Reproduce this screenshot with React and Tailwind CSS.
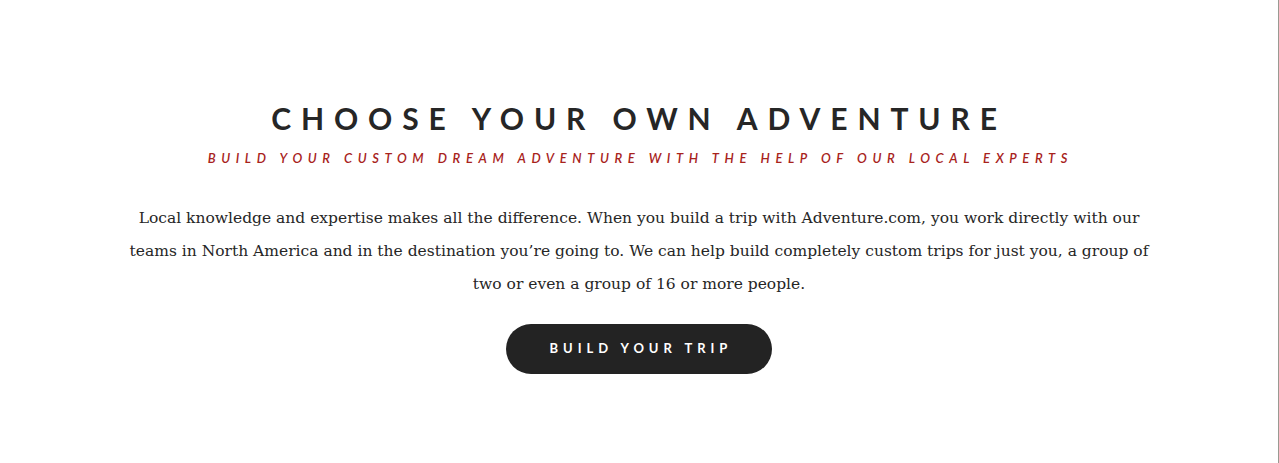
import React from 'react';

const App = () => {
    return (
        <div className="w-[1279px] h-[463px] bg-white flex">
            <div className="flex-1 flex flex-col items-center pt-[100px]">
                {/* Heading */}
                <h2 className="text-[30px] leading-[36px] font-bold tracking-[0.33em] text-[#262626] uppercase font-['Lato',sans-serif]">
                    Choose your own adventure
                </h2>
                <p className="mt-[14px] text-[13px] leading-[16px] italic font-semibold tracking-[0.43em] text-[#a8231c] uppercase pl-[0.2em] font-['Lato',sans-serif]">
                    Build your custom dream adventure with the help of our local experts
                </p>

                {/* Body */}
                <p className="mt-[36px] w-[1032px] text-center text-[15.5px] leading-[33px] text-[#262626] font-['DejaVu_Serif',serif]">
                    Local knowledge and expertise makes all the difference. When you build a trip with Adventure.com, you work directly with our teams in North America and in the destination you’re going to. We can help build completely custom trips for just you, a group of two or even a group of 16 or more people.
                </p>

                <button className="mt-[23px] w-[266px] h-[50px] rounded-full bg-[#232323] text-white text-[13px] font-bold tracking-[0.38em] uppercase pl-[0.3em] font-['Lato',sans-serif]">
                    Build your trip
                </button>
            </div>
            <div className="w-px bg-[#9a9a92]" />
        </div>
    );
};

export default App;
